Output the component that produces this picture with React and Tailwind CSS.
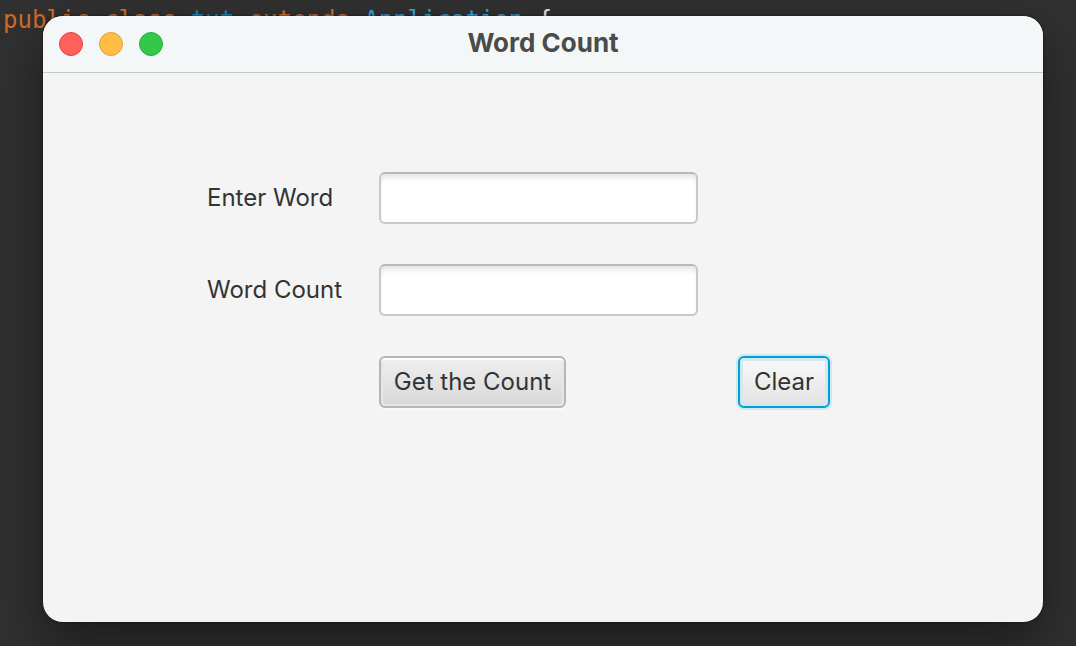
import { useState } from "react";

const field =
  "h-[52px] w-full rounded-md border-2 border-[#c8c8c8] border-t-[#b8b8b8] bg-white px-3 text-2xl text-[#333333] shadow-[inset_0_6px_6px_-3px_rgba(0,0,0,0.12)] outline-none";

function CodeLine() {
  return (
    <code className="absolute top-1 left-[3px] text-2xl leading-8 whitespace-pre text-[#e6e6d8] [font-family:'DejaVu_Sans_Mono',monospace]">
      <span className="text-[#cb6c2c]">public class </span>
      <span className="text-[#1b86b0]">tut</span>
      <span className="text-[#cb6c2c]"> extends </span>
      <span className="text-[#3c9fd8]">Application</span>
      {" {"}
    </code>
  );
}

function TitleBar() {
  return (
    <header className="grid h-[57px] grid-cols-[1fr_auto_1fr] items-center border-b border-[#c8c8c8] bg-[#f3f7f8] px-4">
      <div className="flex gap-4">
        <button type="button" aria-label="Close" className="size-6 rounded-full border border-[#e2443f] bg-[#ff605c]" />
        <button type="button" aria-label="Minimize" className="size-6 rounded-full border border-[#dfa037] bg-[#ffbd44]" />
        <button type="button" aria-label="Zoom" className="size-6 rounded-full border border-[#2bac3b] bg-[#34c84a]" />
      </div>
      <h1 className="pb-0.5 text-[26px] leading-8 font-bold text-[#4a4b4b]">Word Count</h1>
    </header>
  );
}

export default function App() {
  const [text, setText] = useState("");
  const [count, setCount] = useState("");

  const getCount = () => setCount(String(text.split(/\s+/).filter(Boolean).length));
  const clear = () => {
    setText("");
    setCount("");
  };

  return (
    <div className="relative flex min-h-screen overflow-hidden bg-[#303030] pt-4 pr-[33px] pb-6 pl-[43px] [font-family:Inter,'Liberation_Sans',sans-serif]">
      <CodeLine />
      <main className="relative flex flex-1 flex-col overflow-hidden rounded-[20px] bg-[#f4f4f4] shadow-[0_24px_50px_rgba(0,0,0,0.4),0_0_3px_rgba(0,0,0,0.6)]">
        <TitleBar />
        <form
          className="grid grid-cols-[132px_319px_auto] items-center justify-start gap-10 pt-[99px] pb-10 pl-[164px] text-2xl leading-8 text-[#333333]"
          onSubmit={(e) => e.preventDefault()}
        >
          <label htmlFor="word" className="whitespace-nowrap">Enter Word</label>
          <input id="word" className={field} value={text} onChange={(e) => setText(e.target.value)} />
          <label htmlFor="count" className="col-start-1 whitespace-nowrap">Word Count</label>
          <input id="count" className={field} value={count} readOnly />
          <button
            type="button"
            onClick={getCount}
            className="col-start-2 h-[52px] w-[187px] justify-self-start rounded-md border-2 border-[#b5b5b5] bg-linear-to-b from-[#efefef] to-[#d8d8d8] whitespace-nowrap shadow-[0_2px_0_#fafafa,inset_0_2px_0_#fdfdfd,inset_0_0_0_2px_#e6e6e6]"
          >
            Get the Count
          </button>
          <button
            type="button"
            onClick={clear}
            className="h-[52px] w-[92px] rounded-md border-2 border-[#039ed3] bg-linear-to-b from-[#f9f9f9] to-[#e3e3e3] shadow-[0_0_0_2px_#cfe7f0,inset_0_0_0_3px_#d3e8f0]"
          >
            Clear
          </button>
        </form>
      </main>
    </div>
  );
}
